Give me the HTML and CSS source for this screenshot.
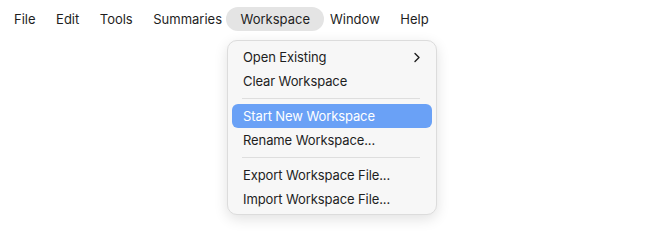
FILE: index.html
```html
<!DOCTYPE html>
<html lang="en">
<head>
    <meta charset="UTF-8" />
    <title>Workspace menu</title>
    <link rel="stylesheet" href="styles.css">
</head>
<body>
    <div class="menubar">
        <div class="item">File</div>
        <div class="item">Edit</div>
        <div class="item">Tools</div>
        <div class="item">Summaries</div>
        <div class="item active">Workspace</div>
        <div class="item">Window</div>
        <div class="item">Help</div>
    </div>
    <div class="dropdown">
        <div class="row">Open Existing
            <svg class="chev" width="8" height="11" viewBox="0 0 8 11"><path d="M2 1.5 L6 5.5 L2 9.5" fill="none" stroke="#1e1e1e" stroke-width="1.4" stroke-linecap="round" stroke-linejoin="round"/></svg>
        </div>
        <div class="row">Clear Workspace</div>
        <div class="sep"></div>
        <div class="row hover">Start New Workspace</div>
        <div class="row">Rename Workspace...</div>
        <div class="sep"></div>
        <div class="row">Export Workspace File...</div>
        <div class="row">Import Workspace File...</div>
    </div>
</body>
</html>
```
FILE: styles.css
```css
*{
    margin:0;
    padding:0;
    box-sizing:border-box;
}
body{
    background:#fff;
    font-family:"Inter","Liberation Sans",sans-serif;
    font-size:13px;
    color:#1e1e1e;
    position:relative;
    height:240px;
}
.menubar{
    display:flex;
    padding-top:7px;
}
.item{
    height:24px;
    line-height:24px;
    padding:0 14px;
    margin-right:-7.5px;
    border-radius:12px;
}
.item.active{
    background:#e4e4e4;
    padding:0 14px 0 15px;
    margin-right:-8px;
    margin-left:-3px;
}
.dropdown{
    position:absolute;
    left:227px;
    top:40px;
    width:210px;
    padding:4px 4px 3px;
    background:#f7f7f7;
    border:1px solid #dcdcdc;
    border-radius:10px;
    box-shadow:0 4px 14px rgba(0,0,0,.12);
}
.row{
    height:24px;
    line-height:24px;
    padding:0 11px;
    border-radius:6px;
    display:flex;
    justify-content:space-between;
    align-items:center;
    white-space:nowrap;
    letter-spacing:-0.1px;
}
.row.hover{
    background:#6aa1f6;
    color:#fff;
}
.sep{
    height:1px;
    background:#dedede;
    margin:5px 12px 5px 10px;
}
```
